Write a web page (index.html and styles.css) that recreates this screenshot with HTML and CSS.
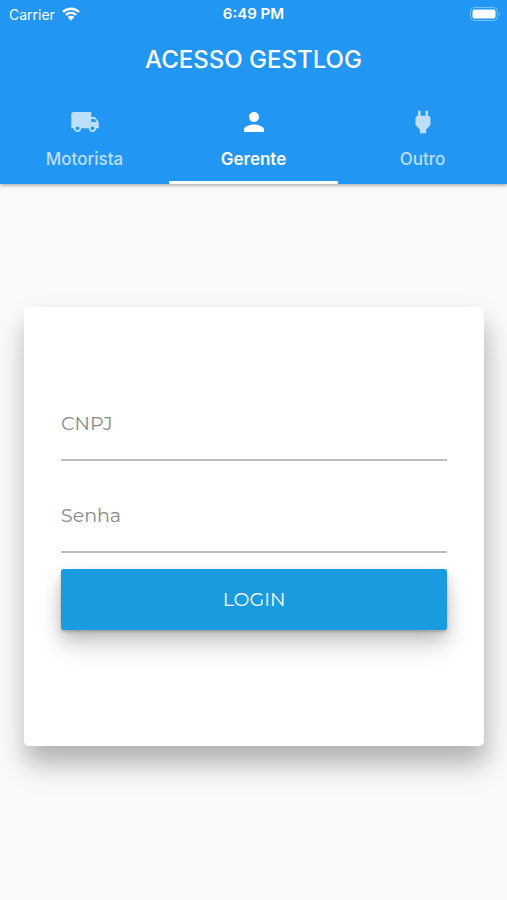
FILE: index.html
```html
<!DOCTYPE html>
<html lang="pt-BR">
<head>
  <meta charset="UTF-8" />
  <meta name="viewport" content="width=device-width, initial-scale=1.0" />
  <title>Acesso Gestlog</title>
  <link rel="stylesheet" href="styles.css">
</head>
<body>
  <header class="app-bar">
    <div class="status-bar">
      <div class="carrier">
        <span>Carrier</span>
        <svg class="wifi" viewBox="0 0 18 14" aria-hidden="true">
          <path d="M1 5a11.500 11.500 0 0 1 16 0M3.900 8a7.300 7.300 0 0 1 10.200 0" fill="none" stroke="currentColor" stroke-width="2.300" />
          <path d="M9 13.500L5.600 10.200a4.800 4.800 0 0 1 6.800 0z" fill="currentColor" />
        </svg>
      </div>
      <span class="clock">6:49 PM</span>
      <svg class="battery" viewBox="0 0 31 14" aria-hidden="true">
        <rect x="0.500" y="0.500" width="27" height="13" rx="4" fill="none" stroke="currentColor" opacity="0.400" />
        <rect x="2.500" y="2.500" width="23" height="9" rx="2" fill="currentColor" />
        <path d="M29 5v4q2-2 0-4z" fill="currentColor" opacity="0.400" />
      </svg>
    </div>

    <h1>ACESSO GESTLOG</h1>

    <div class="tabs" role="tablist">
      <button class="tab" type="button" role="tab" aria-selected="false">
        <svg viewBox="0 0 24 24" aria-hidden="true"><path d="M20 8h-3V4H3c-1.100 0-2 .9-2 2v11h2c0 1.660 1.340 3 3 3s3-1.340 3-3h6c0 1.660 1.340 3 3 3s3-1.340 3-3h2v-5l-3-4zM6 18.500c-.83 0-1.500-.67-1.500-1.500s.67-1.500 1.500-1.500 1.500.67 1.500 1.500-.67 1.500-1.500 1.500zm13.500-9l1.960 2.500H17V9.500h2.500zm-1.500 9c-.83 0-1.500-.67-1.500-1.500s.67-1.500 1.500-1.500 1.500.67 1.500 1.500-.67 1.500-1.500 1.500z" /></svg>
        <span>Motorista</span>
      </button>
      <button class="tab active" type="button" role="tab" aria-selected="true">
        <svg viewBox="0 0 24 24" aria-hidden="true"><path d="M12 12c2.210 0 4-1.790 4-4s-1.790-4-4-4-4 1.790-4 4 1.790 4 4 4zm0 2c-2.670 0-8 1.340-8 4v2h16v-2c0-2.660-5.330-4-8-4z" /></svg>
        <span>Gerente</span>
      </button>
      <button class="tab" type="button" role="tab" aria-selected="false">
        <svg viewBox="0 0 24 24" aria-hidden="true"><path d="M16.010 7L16 3h-2v4h-4V3H8v4h-.01C7 6.990 6 7.990 6 8.990v5.490L9.500 18v3h5v-3l3.500-3.510v-5.500c0-1-1-2-1.990-1.990z" /></svg>
        <span>Outro</span>
      </button>
    </div>
  </header>

  <main>
    <form class="login-card">
      <div class="field">
        <input type="text" id="cnpj" placeholder=" ">
        <label for="cnpj">CNPJ</label>
      </div>
      <div class="field">
        <input type="password" id="senha" placeholder=" ">
        <label for="senha">Senha</label>
      </div>
      <button class="login-button" type="button">LOGIN</button>
    </form>
  </main>
</body>
</html>
```
FILE: styles.css
```css
* {
  box-sizing: border-box;
}

body {
  margin: 0;
  min-height: 100vh;
  background: #fafafa;
  font-family: Inter, "Liberation Sans", sans-serif;
}

.app-bar {
  position: relative;
  background: #2196f3;
  color: #fff;
  box-shadow: 0 1px 4px rgba(0, 0, 0, 0.4);
}

.status-bar {
  display: grid;
  grid-template-columns: 1fr auto 1fr;
  align-items: center;
  height: 28px;
  padding: 0 6px;
  font-size: 14px;
}

.carrier {
  display: flex;
  align-items: center;
  gap: 7px;
  padding-left: 3px;
}

.wifi {
  width: 18px;
  height: 14px;
}

.clock {
  font-size: 15px;
  line-height: 28px;
  font-weight: 600;
}

.battery {
  width: 31px;
  height: 14px;
  justify-self: end;
}

h1 {
  margin: 0;
  font-size: 24px;
  line-height: 64px;
  font-weight: 500;
  text-align: center;
}

.tabs {
  display: grid;
  grid-template-columns: repeat(3, 1fr);
}

.tab {
  display: flex;
  flex-direction: column;
  align-items: center;
  gap: 11px;
  height: 92px;
  padding: 15px 0 0;
  border: none;
  border-bottom: 3px solid transparent;
  background: none;
  color: rgba(255, 255, 255, 0.7);
  font-family: inherit;
  font-size: 17px;
  line-height: 22px;
  font-weight: 500;
  cursor: pointer;
}

.tab svg {
  width: 30px;
  height: 30px;
  fill: currentColor;
}

.tab.active {
  border-bottom-color: #fff;
  color: #fff;
  font-weight: 600;
}

main {
  padding: 123px 23px 123px 24px;
}

.login-card {
  display: flex;
  flex-direction: column;
  padding: 78px 37px 116px;
  border-radius: 5px;
  background: #fff;
  box-shadow: 2px 18px 32px rgba(0, 0, 0, 0.2), 2px 16px 20px rgba(0, 0, 0, 0.12);
}

/* label sits in the same cell as its input */
.field {
  display: grid;
  align-items: center;
  margin-bottom: 16px;
  font-family: Montserrat, Inter, sans-serif;
  font-size: 19px;
}

.field input,
.field label {
  grid-area: 1 / 1;
}

.field input {
  width: 100%;
  height: 76px;
  padding: 0;
  border: none;
  border-bottom: 2px solid #bdbdbd;
  background: none;
  color: #333;
  font: inherit;
  outline: none;
}

.field label {
  color: #888;
  pointer-events: none;
}

.field input:focus + label,
.field input:not(:placeholder-shown) + label {
  align-self: start;
  font-size: 14px;
}

.login-button {
  height: 61px;
  border: none;
  border-radius: 3px;
  background: #189bdf;
  color: #fff;
  font-family: Montserrat, Inter, sans-serif;
  font-size: 19px;
  box-shadow: 0 16px 24px rgba(0, 0, 0, 0.16), 0 6px 16px rgba(0, 0, 0, 0.14), 0 2px 3px rgba(0, 0, 0, 0.2);
  cursor: pointer;
}
```
